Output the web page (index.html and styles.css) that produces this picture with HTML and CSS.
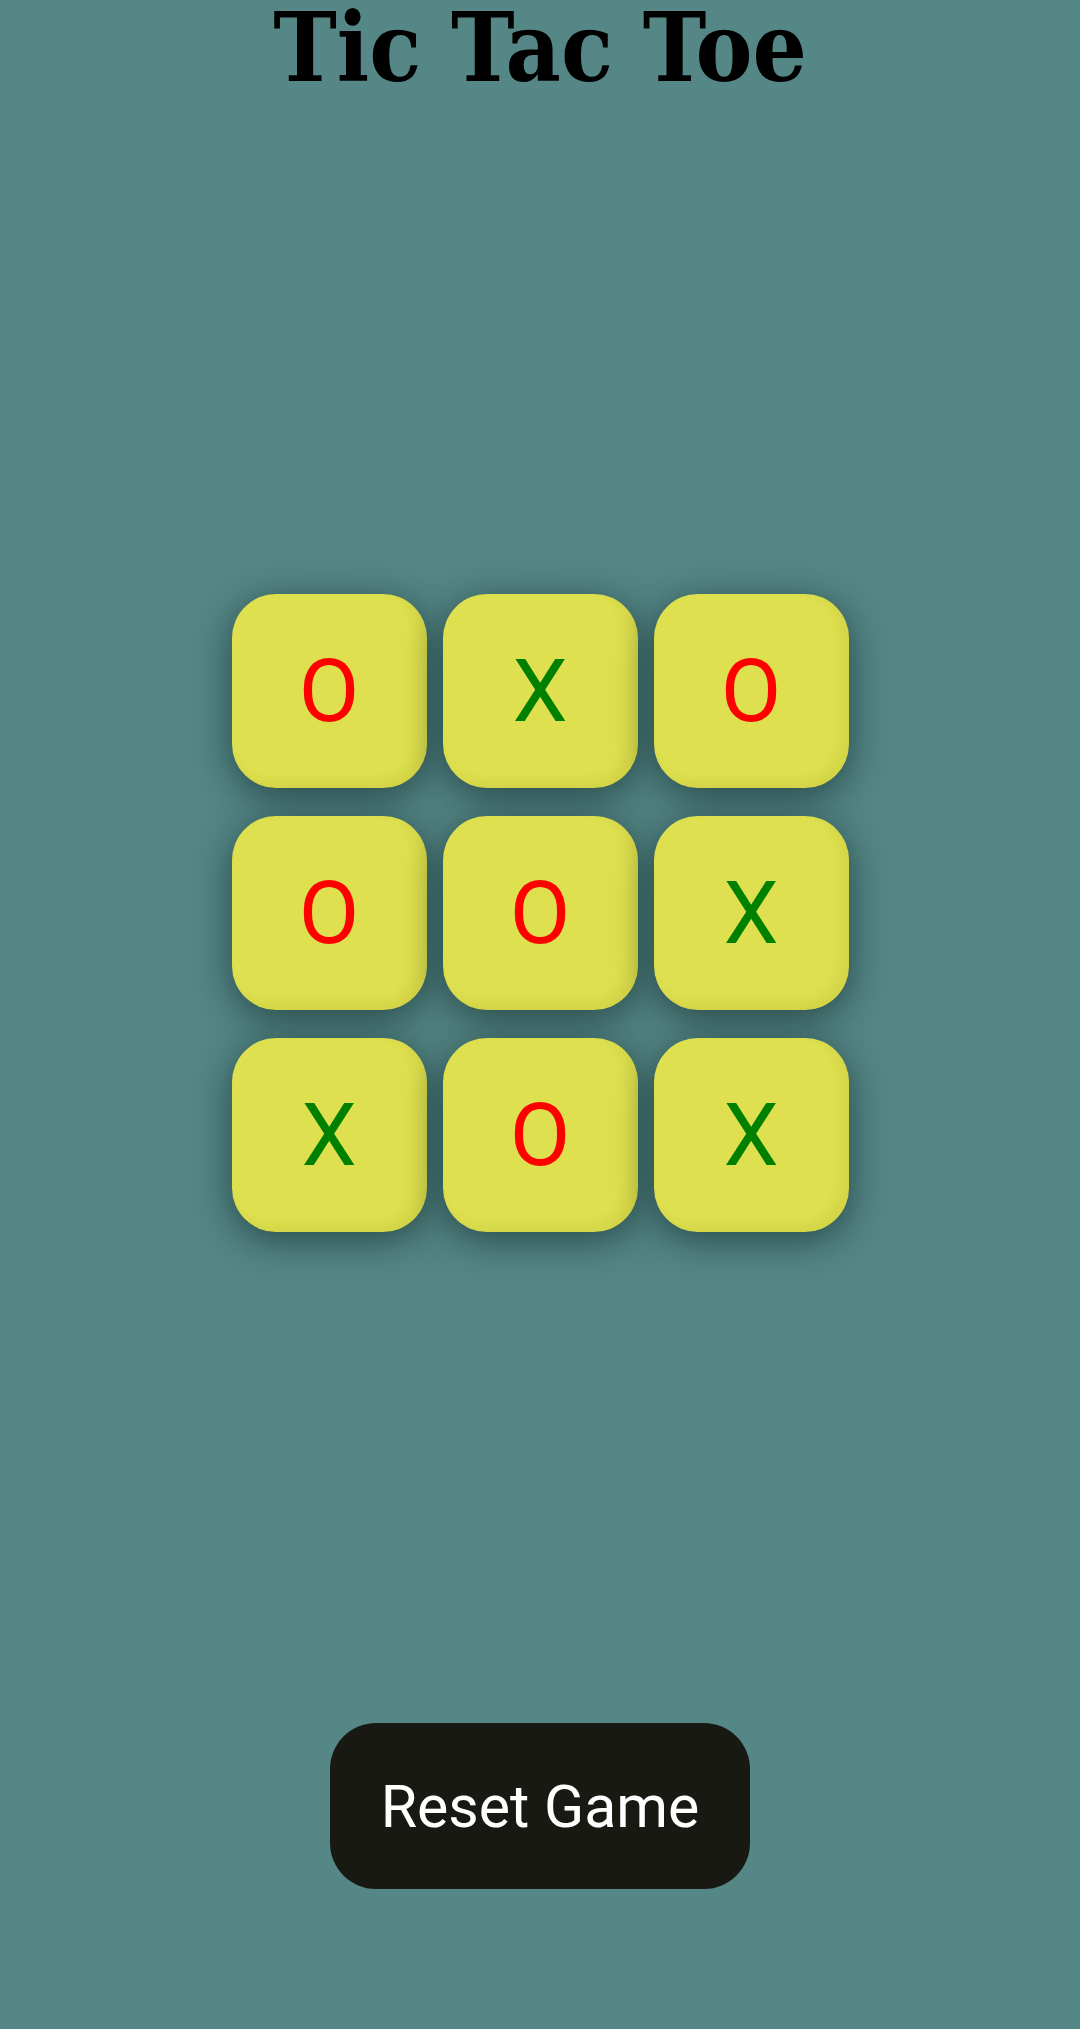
FILE: index.html
```html
<!DOCTYPE html>
<html lang="en">
<head>
<meta charset="utf-8">
<title>Tic Tac Toe</title>
<link rel="stylesheet" href="styles.css">
</head>
<body>
<main class="app">
  <h1 class="title">Tic Tac Toe</h1>
  <div class="board">
    <div class="cell o">O</div>
    <div class="cell x">X</div>
    <div class="cell o">O</div>
    <div class="cell o">O</div>
    <div class="cell o">O</div>
    <div class="cell x">X</div>
    <div class="cell x">X</div>
    <div class="cell o">O</div>
    <div class="cell x">X</div>
  </div>
  <button class="reset">Reset Game</button>
</main>
</body>
</html>
```

FILE: styles.css
```css
html, body {
  margin: 0;
  padding: 0;
}

body {
  background: #548786;
  min-height: 2029px;
  font-family: Roboto, "Liberation Sans", sans-serif;
}

.app {
  display: flex;
  flex-direction: column;
  align-items: center;
}

.title {
  margin: 0;
  height: 97px;
  font-family: "DejaVu Serif", "Liberation Serif", serif;
  font-stretch: condensed;
  font-weight: bold;
  font-size: 95px;
  line-height: 96px;
  color: #000;
}

.board {
  margin-top: 497px;
  display: grid;
  grid-template-columns: repeat(3, 195px);
  grid-auto-rows: 194px;
  column-gap: 16px;
  row-gap: 28px;
}

.cell {
  display: flex;
  align-items: center;
  justify-content: center;
  background: #dfe04f;
  border-radius: 44px;
  box-shadow: 0 8px 38px rgba(10, 30, 30, 0.6),
              inset -8px -6px 12px rgba(120, 120, 0, 0.10);
  font-family: Roboto, sans-serif;
  font-size: 88px;
  line-height: 1;
}

.cell.o {
  color: #ff0000;
}

.cell.x {
  color: #008000;
}

.reset {
  margin-top: 491px;
  width: 420px;
  height: 166px;
  border: none;
  border-radius: 46px;
  background: #191913;
  color: #ffffff;
  font-family: Roboto, sans-serif;
  font-size: 59px;
  padding: 0;
}
```
